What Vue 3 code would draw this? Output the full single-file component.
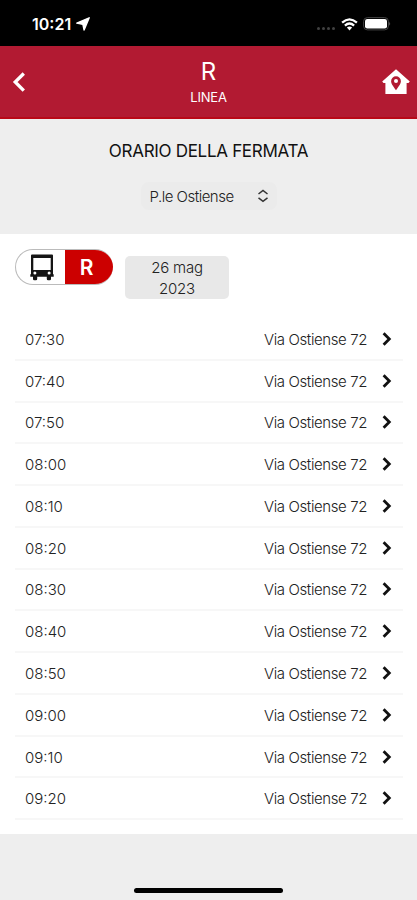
<script setup>
const stop = 'Via Ostiense 72'
const times = [
  '07:30', '07:40', '07:50', '08:00', '08:10', '08:20',
  '08:30', '08:40', '08:50', '09:00', '09:10', '09:20',
]
</script>

<template>
  <div class="screen">
    <div class="status">
      <div class="clock">
        <span>10:21</span>
        <svg width="14" height="14" viewBox="0 0 14 14"><path d="M13.2.8 8.1 13 6.9 7.4.8 6.1Z" fill="#fff" stroke="#fff" stroke-width="1.4" stroke-linejoin="round" /></svg>
      </div>
      <div class="signals">
        <div class="dots"><i v-for="n in 4" :key="n"></i></div>
        <svg class="wifi" width="17" height="13" viewBox="0 0 17 13">
          <g fill="none" stroke="#fff" stroke-width="2.3">
            <path d="M1.1 4.7Q8.5-1.9 15.9 4.7" />
            <path d="M3.9 7.6Q8.5 3.5 13.1 7.6" />
          </g>
          <path d="M5.9 9.6Q8.5 7.5 11.1 9.6L8.5 12.4Z" fill="#fff" />
        </svg>
        <svg class="battery" width="28" height="14" viewBox="0 0 28 14">
          <rect x=".6" y=".6" width="24.8" height="12.3" rx="3.8" fill="none" stroke="#444" stroke-width="1" />
          <rect x="2" y="2" width="22" height="9.6" rx="2.3" fill="#fff" />
          <path d="M26.4 4.6q1.3 2.1 0 4.2Z" fill="#777" />
        </svg>
      </div>
    </div>

    <header class="header">
      <svg class="back" width="14" height="21" viewBox="0 0 14 21"><path d="M11.8 2.5 3.2 11l8.6 8.7" fill="none" stroke="#fff" stroke-width="3.3" /></svg>
      <div class="titles">
        <h1>R</h1>
        <p>LINEA</p>
      </div>
      <svg class="home" width="28" height="26" viewBox="0 0 28 26">
        <path d="M14 .3 27.8 12.6 26.5 14H24.6V25H3.4V14H1.5L.2 12.6Z" fill="#fff" />
        <path d="M14 21.3C10.8 16.7 9.1 14.5 9.1 12.2a4.9 4.9 0 0 1 9.8 0c0 2.3-1.7 4.5-4.9 9.1Z" fill="#b21a32" />
        <circle cx="14" cy="12.1" r="2" fill="#fff" />
      </svg>
    </header>

    <section class="picker">
      <h2>ORARIO DELLA FERMATA</h2>
      <div class="select">
        <span>P.le Ostiense</span>
        <svg width="12" height="14" viewBox="0 0 12 14"><path d="M1.5 5 6 1.5 10.5 5M1.5 8.8 6 12.3l4.5-3.5" fill="none" stroke="#333" stroke-width="1.5" /></svg>
      </div>
    </section>

    <main class="content">
      <div class="filters">
        <div class="line">
          <div class="vehicle">
            <svg width="24" height="27" viewBox="0 0 24 27">
              <path fill-rule="evenodd" d="M1 1.5Q1 .5 2 .5H22Q23 .5 23 1.5V21H1ZM3.3 3.9V15.9H20.7V3.9Z" fill="#151515" />
              <path d="M.3 20.3H23.7V22.8H.3ZM3 22H7.2V25q0 1.3-1.3 1.3H4.3Q3 26.3 3 25ZM16.8 22H21v3q0 1.3-1.3 1.3h-1.6q-1.3 0-1.3-1.3Z" fill="#151515" />
              <circle cx="4.9" cy="19" r="1.5" fill="#fff" /><circle cx="19.1" cy="19" r="1.5" fill="#fff" />
            </svg>
          </div>
          <div class="name">R</div>
        </div>
        <div class="date"><span>26 mag</span><span>2023</span></div>
      </div>
      <ul class="rows">
        <li v-for="time in times" :key="time">
          <span class="time">{{ time }}</span>
          <span class="stop">{{ stop }}</span>
          <svg width="10" height="15" viewBox="0 0 10 15"><path d="m1.6 1.2 5.7 5.8-5.7 5.8" fill="none" stroke="#111" stroke-width="2.8" /></svg>
        </li>
      </ul>
    </main>
    <footer class="bottom"><div class="indicator"></div></footer>
  </div>
</template>

<style>
body { margin: 0; }
</style>

<style scoped>
.screen { width: 417px; height: 900px; display: flex; flex-direction: column; overflow: hidden; background: #eee; font-family: Inter, "Liberation Sans", sans-serif; color: #111; }
.screen * { box-sizing: border-box; }
h1, h2, p, ul { margin: 0; padding: 0; font-weight: 400; }
svg { display: block; flex: none; }
.status { height: 46px; flex: none; background: #000; color: #fff; display: flex; justify-content: space-between; padding: 0 26px 0 32px; }
.clock { display: flex; align-items: center; gap: 5px; height: 48px; font-size: 16px; font-weight: 600; }
.signals { display: flex; align-items: center; height: 48px; }
.dots { display: flex; gap: 2px; padding-top: 9px; margin-right: 6px; }
.dots i { width: 3px; height: 3px; border-radius: 50%; background: #414141; }
.battery { margin-left: 5px; }
.header { height: 73px; flex: none; background: #b21a32; border-bottom: 2px solid #b90817; color: #fff; display: flex; align-items: center; justify-content: space-between; padding: 0 7px 0 12px; }
.titles { text-align: center; padding-left: 9px; }
h1 { font-size: 24px; line-height: 28px; }
.titles p { font-size: 13px; line-height: 16px; margin-top: 3px; letter-spacing: -.2px; }
.picker { height: 115px; flex: none; display: flex; flex-direction: column; align-items: center; padding-top: 20px; }
h2 { font-size: 17px; line-height: 24px; letter-spacing: -.3px; }
.select { width: 136px; height: 28px; margin-top: 19px; padding: 0 8px 0 9px; border-radius: 8px; background: #ebebeb; display: flex; align-items: center; justify-content: space-between; font-size: 15px; font-weight: 300; letter-spacing: -.5px; color: #222; }
.content { height: 600px; flex: none; background: #fff; padding: 15px 15px 0; }
.filters { height: 70px; display: flex; align-items: flex-start; gap: 12px; }
.line { width: 98px; height: 36px; border: 1px solid #bbb; border-right: 0; border-radius: 18px; display: flex; overflow: hidden; }
.vehicle { width: 49px; display: flex; align-items: center; justify-content: flex-end; padding-right: 11px; }
.name { flex: 1; margin: -1px 0; background: #c00; color: #fff; font-size: 21px; font-weight: 600; display: flex; align-items: center; justify-content: center; padding-right: 5px; }
.date { width: 104px; height: 43px; margin-top: 7px; border-radius: 5px; background: #e8e8e8; display: flex; flex-direction: column; align-items: center; padding-top: 1px; font-size: 15px; line-height: 21px; font-weight: 300; letter-spacing: -.2px; color: #222; }
.rows { list-style: none; display: grid; grid-auto-rows: 41.78px; }
.rows li { display: flex; align-items: center; border-bottom: 2px solid #f7f7f7; padding: 1px 11px 0 10px; margin-right: -1px; font-size: 15px; font-weight: 300; color: #222; }
.stop { margin-left: auto; margin-right: 15px; letter-spacing: -.4px; }
.bottom { flex: 1; display: flex; align-items: flex-end; justify-content: center; padding-bottom: 7px; }
.indicator { width: 149px; height: 5px; border-radius: 3px; background: #000; }
</style>
